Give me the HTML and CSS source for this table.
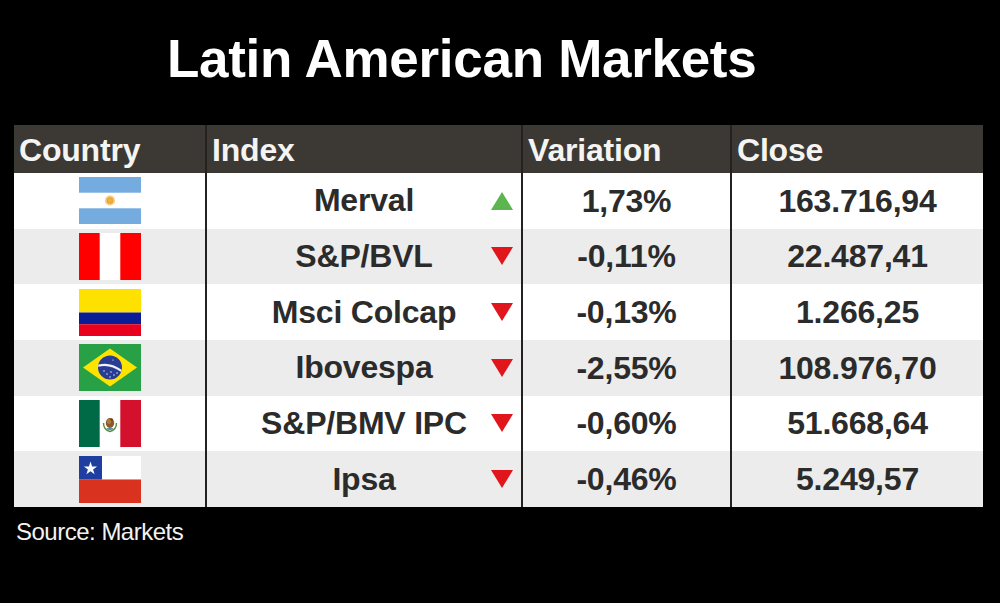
FILE: index.html
```html
<!DOCTYPE html>
<html lang="en">
<head>
<meta charset="utf-8">
<title>Latin American Markets</title>
<link rel="stylesheet" href="styles.css">
</head>
<body>
<div class="page">
  <h1 class="title">Latin American Markets</h1>
  <div class="table">
    <div class="th">Country</div>
    <div class="th">Index</div>
    <div class="th">Variation</div>
    <div class="th">Close</div>

    <!-- Argentina -->
    <div class="td flag-cell">
      <svg class="flag" viewBox="0 0 62 47" width="62" height="47">
        <rect width="62" height="47" fill="#fff"/>
        <rect width="62" height="15.7" fill="#74acdf"/>
        <rect y="31.3" width="62" height="15.7" fill="#74acdf"/>
        <circle cx="31" cy="23.5" r="5" fill="#f3c98a"/>
        <circle cx="31" cy="23.5" r="3.2" fill="#e9a62b"/>
        <circle cx="31" cy="23.5" r="1.8" fill="#f0b43a"/>
      </svg>
    </div>
    <div class="td index-cell"><span class="sp"></span><span class="name">Merval</span><span class="arrow-wrap"><svg class="arrow" viewBox="0 0 22 18" width="22" height="18"><polygon points="11,0 22,18 0,18" fill="#5cb54f"/></svg></span></div>
    <div class="td num">1,73%</div>
    <div class="td num">163.716,94</div>

    <!-- Peru -->
    <div class="td flag-cell alt">
      <svg class="flag" viewBox="0 0 62 47" width="62" height="47">
        <rect width="62" height="47" fill="#fff"/>
        <rect width="20.7" height="47" fill="#ff0000"/>
        <rect x="41.3" width="20.7" height="47" fill="#ff0000"/>
      </svg>
    </div>
    <div class="td index-cell alt"><span class="sp"></span><span class="name">S&amp;P/BVL</span><span class="arrow-wrap"><svg class="arrow" viewBox="0 0 22 18" width="22" height="18"><polygon points="0,0 22,0 11,18" fill="#e0161c"/></svg></span></div>
    <div class="td num alt">-0,11%</div>
    <div class="td num alt">22.487,41</div>

    <!-- Colombia -->
    <div class="td flag-cell">
      <svg class="flag" viewBox="0 0 62 47" width="62" height="47">
        <rect width="62" height="23.5" fill="#ffe100"/>
        <rect y="23.5" width="62" height="11.75" fill="#0a1c96"/>
        <rect y="35.25" width="62" height="11.75" fill="#e8001c"/>
      </svg>
    </div>
    <div class="td index-cell"><span class="sp"></span><span class="name">Msci Colcap</span><span class="arrow-wrap"><svg class="arrow" viewBox="0 0 22 18" width="22" height="18"><polygon points="0,0 22,0 11,18" fill="#e0161c"/></svg></span></div>
    <div class="td num">-0,13%</div>
    <div class="td num">1.266,25</div>

    <!-- Brazil -->
    <div class="td flag-cell alt">
      <svg class="flag" viewBox="0 0 62 47" width="62" height="47">
        <rect width="62" height="47" fill="#28a046"/>
        <polygon points="4,23.5 31,4.5 58,23.5 31,42.5" fill="#fde400"/>
        <circle cx="31" cy="23.5" r="12" fill="#283c94"/>
        <path d="M19.4,20.6 Q31,17.2 42.6,25.8 L42.2,28 Q31,19.8 19.1,22.8 Z" fill="#eef1f6"/>
        <circle cx="25" cy="27" r="0.7" fill="#fff"/>
        <circle cx="28" cy="30" r="0.7" fill="#fff"/>
        <circle cx="32" cy="28" r="0.7" fill="#fff"/>
        <circle cx="35" cy="31" r="0.7" fill="#fff"/>
        <circle cx="38" cy="29" r="0.7" fill="#fff"/>
        <circle cx="31" cy="33" r="0.7" fill="#fff"/>
        <circle cx="34" cy="16" r="0.6" fill="#fff"/>
      </svg>
    </div>
    <div class="td index-cell alt"><span class="sp"></span><span class="name">Ibovespa</span><span class="arrow-wrap"><svg class="arrow" viewBox="0 0 22 18" width="22" height="18"><polygon points="0,0 22,0 11,18" fill="#e0161c"/></svg></span></div>
    <div class="td num alt">-2,55%</div>
    <div class="td num alt">108.976,70</div>

    <!-- Mexico -->
    <div class="td flag-cell">
      <svg class="flag" viewBox="0 0 62 47" width="62" height="47">
        <rect width="62" height="47" fill="#fff"/>
        <rect width="20.7" height="47" fill="#006a47"/>
        <rect x="41.3" width="20.7" height="47" fill="#d4112c"/>
        <path d="M24.5,23 Q24.5,30 31,31.5 Q37.5,30 37.5,23" fill="none" stroke="#5a8a3a" stroke-width="1.4"/>
        <ellipse cx="31" cy="23" rx="4.2" ry="5" fill="#8a5a2b"/>
        <ellipse cx="30" cy="21.5" rx="2.2" ry="2.6" fill="#b07a3c"/>
        <circle cx="32.8" cy="19.6" r="1.2" fill="#6b3f1c"/>
        <ellipse cx="31" cy="28.8" rx="3.4" ry="1.1" fill="#4f8fb5"/>
      </svg>
    </div>
    <div class="td index-cell"><span class="sp"></span><span class="name">S&amp;P/BMV IPC</span><span class="arrow-wrap"><svg class="arrow" viewBox="0 0 22 18" width="22" height="18"><polygon points="0,0 22,0 11,18" fill="#e0161c"/></svg></span></div>
    <div class="td num">-0,60%</div>
    <div class="td num">51.668,64</div>

    <!-- Chile -->
    <div class="td flag-cell alt">
      <svg class="flag" viewBox="0 0 62 47" width="62" height="47">
        <rect width="62" height="23.5" fill="#fff"/>
        <rect y="23.5" width="62" height="23.5" fill="#d9321f"/>
        <rect width="23" height="23.5" fill="#1f3fa0"/>
        <polygon points="11.5,5.6 13.1,10.4 18.1,10.4 14.1,13.4 15.6,18.2 11.5,15.2 7.4,18.2 8.9,13.4 4.9,10.4 9.9,10.4" fill="#fff"/>
      </svg>
    </div>
    <div class="td index-cell alt"><span class="sp"></span><span class="name">Ipsa</span><span class="arrow-wrap"><svg class="arrow" viewBox="0 0 22 18" width="22" height="18"><polygon points="0,0 22,0 11,18" fill="#e0161c"/></svg></span></div>
    <div class="td num alt">-0,46%</div>
    <div class="td num alt">5.249,57</div>
  </div>
  <p class="source">Source: Markets</p>
</div>
</body>
</html>
```

FILE: styles.css
```css
html, body {
  margin: 0;
  padding: 0;
  background: #000;
}

body {
  width: 1000px;
  height: 603px;
  overflow: hidden;
  font-family: "Liberation Sans", Arial, sans-serif;
}

.page {
  padding: 29px 17px 0 14px;
}

.title {
  margin: 0 0 36px 0;
  padding-left: 153px;
  font-size: 53px;
  line-height: 60px;
  font-weight: 700;
  color: #fff;
  letter-spacing: -0.3px;
}

.table {
  width: 969px;
  display: grid;
  grid-template-columns: 191px 314px 207px 251px;
  grid-template-rows: 48px repeat(6, 55.67px);
  column-gap: 2px;
  background: #232220;
}

.th {
  background: #3c3935;
  color: #f4f4f2;
  font-size: 32px;
  font-weight: 700;
  line-height: 46px;
  padding: 2px 0 0 5px;
  letter-spacing: -0.2px;
}

.td {
  background: #fff;
  color: #2b2b2b;
  font-size: 32px;
  font-weight: 700;
  display: flex;
  align-items: center;
  justify-content: center;
  letter-spacing: -0.2px;
}

.td.alt {
  background: #ececec;
}

.flag {
  display: block;
}

.index-cell {
  display: grid;
  grid-template-columns: 1fr auto 1fr;
  align-items: center;
}

.arrow-wrap {
  display: flex;
  justify-content: flex-end;
  padding-right: 8px;
}

.arrow {
  display: block;
}

.num {
  padding-top: 1px;
}

.source {
  margin: 10px 0 0 2px;
  font-size: 24px;
  line-height: 30px;
  color: #f2f2f2;
  letter-spacing: -0.5px;
}
```
